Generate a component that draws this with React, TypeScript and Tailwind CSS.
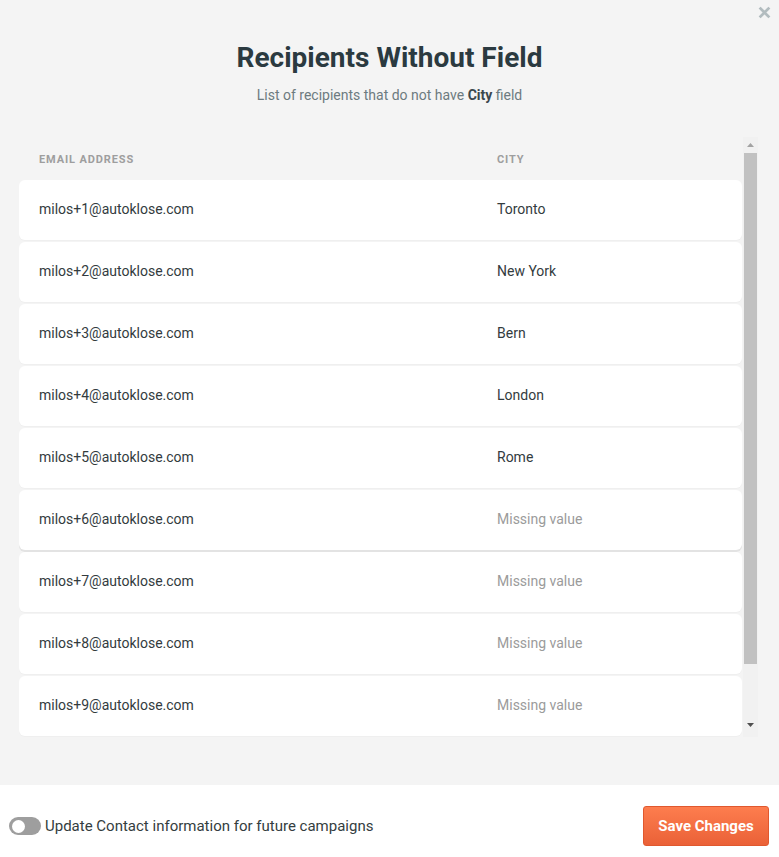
import React from "react";

const rows: { email: string; city: string | null }[] = [
  { email: "milos+1@autoklose.com", city: "Toronto" },
  { email: "milos+2@autoklose.com", city: "New York" },
  { email: "milos+3@autoklose.com", city: "Bern" },
  { email: "milos+4@autoklose.com", city: "London" },
  { email: "milos+5@autoklose.com", city: "Rome" },
  { email: "milos+6@autoklose.com", city: null },
  { email: "milos+7@autoklose.com", city: null },
  { email: "milos+8@autoklose.com", city: null },
  { email: "milos+9@autoklose.com", city: null },
  { email: "milos+10@autoklose.com", city: null },
];

export default function App() {
  return (
    <div
      className="w-[779px] h-[857px] flex flex-col"
      style={{ fontFamily: "Roboto, 'Liberation Sans', sans-serif" }}
    >
      <div className="relative h-[785px] bg-[#f4f4f4] flex flex-col items-center">
        <button className="absolute right-[8px] top-[6px] w-[13px] h-[13px]" aria-label="close">
          <svg viewBox="0 0 12 12" width="13" height="13">
            <path d="M1.5 1.5 L10.5 10.5 M10.5 1.5 L1.5 10.5" stroke="#b2bcbf" strokeWidth="2.6" strokeLinecap="butt" />
          </svg>
        </button>
        <h1 className="mt-[40px] text-[28px] leading-[36px] font-bold text-[#2b3a40]">
          Recipients Without Field
        </h1>
        <p className="mt-[9px] text-[14px] leading-[20px] text-[#6d7b80]">
          List of recipients that do not have <span className="font-bold text-[#3b484d]">City</span> field
        </p>
        <div className="mt-[32px] self-stretch ml-[19px] mr-[21px] h-[600px] flex">
          <div className="flex-1 overflow-hidden">
            <div className="grid grid-cols-[458px_1fr] pl-[20px] h-[43px] pt-[3px] items-center text-[11px] font-bold tracking-[0.08em] text-[#9e9e9e] uppercase">
              <span>Email Address</span>
              <span>City</span>
            </div>
            {rows.map((r, i) => (
              <div
                key={r.email}
                className={`grid grid-cols-[458px_1fr] pl-[20px] pb-[2px] h-[60px] mb-[2px] items-center bg-white rounded-[6px] mr-px text-[14px] leading-[20px] ${
                  i === 5 ? "shadow-[0_2px_0_#e3e3e3]" : "shadow-[0_1px_0_#efefef]"
                }`}
              >
                <span className="text-[#333b3e]">{r.email}</span>
                {r.city ? (
                  <span className="text-[#333b3e]">{r.city}</span>
                ) : (
                  <span className="text-[#9b9b9b]">Missing value</span>
                )}
              </div>
            ))}
          </div>
          <div className="w-[15px] bg-[#f1f1f1] flex flex-col">
            <div className="h-[16px] flex items-center justify-center">
              <svg width="7" height="4" viewBox="0 0 7 4">
                <path d="M3.5 0 L7 4 L0 4 Z" fill="#a3a3a3" />
              </svg>
            </div>
            <div className="flex-1 px-[1px]">
              <div className="h-[511px] bg-[#c1c1c1]" />
            </div>
            <div className="h-[22px] flex items-start justify-center pt-[8px]">
              <svg width="7" height="4" viewBox="0 0 7 4">
                <path d="M0 0 L7 0 L3.5 4 Z" fill="#505050" />
              </svg>
            </div>
          </div>
        </div>
      </div>
      <div className="h-[72px] bg-white flex items-center justify-between pl-[9px] pr-[10px] pt-[10px]">
        <label className="flex items-center gap-[4px]">
          <span className="w-[32px] h-[18px] rounded-full bg-[#9e9e9e] flex items-center px-[3px]">
            <span className="w-[13px] h-[13px] rounded-full bg-white" />
          </span>
          <span className="text-[15px] text-[#343d40]">Update Contact information for future campaigns</span>
        </label>
        <button className="w-[126px] h-[40px] rounded-[3px] border border-[#e0582e] bg-gradient-to-b from-[#fd7d4e] to-[#ea6137] text-white font-bold text-[15px]">
          Save Changes
        </button>
      </div>
    </div>
  );
}
